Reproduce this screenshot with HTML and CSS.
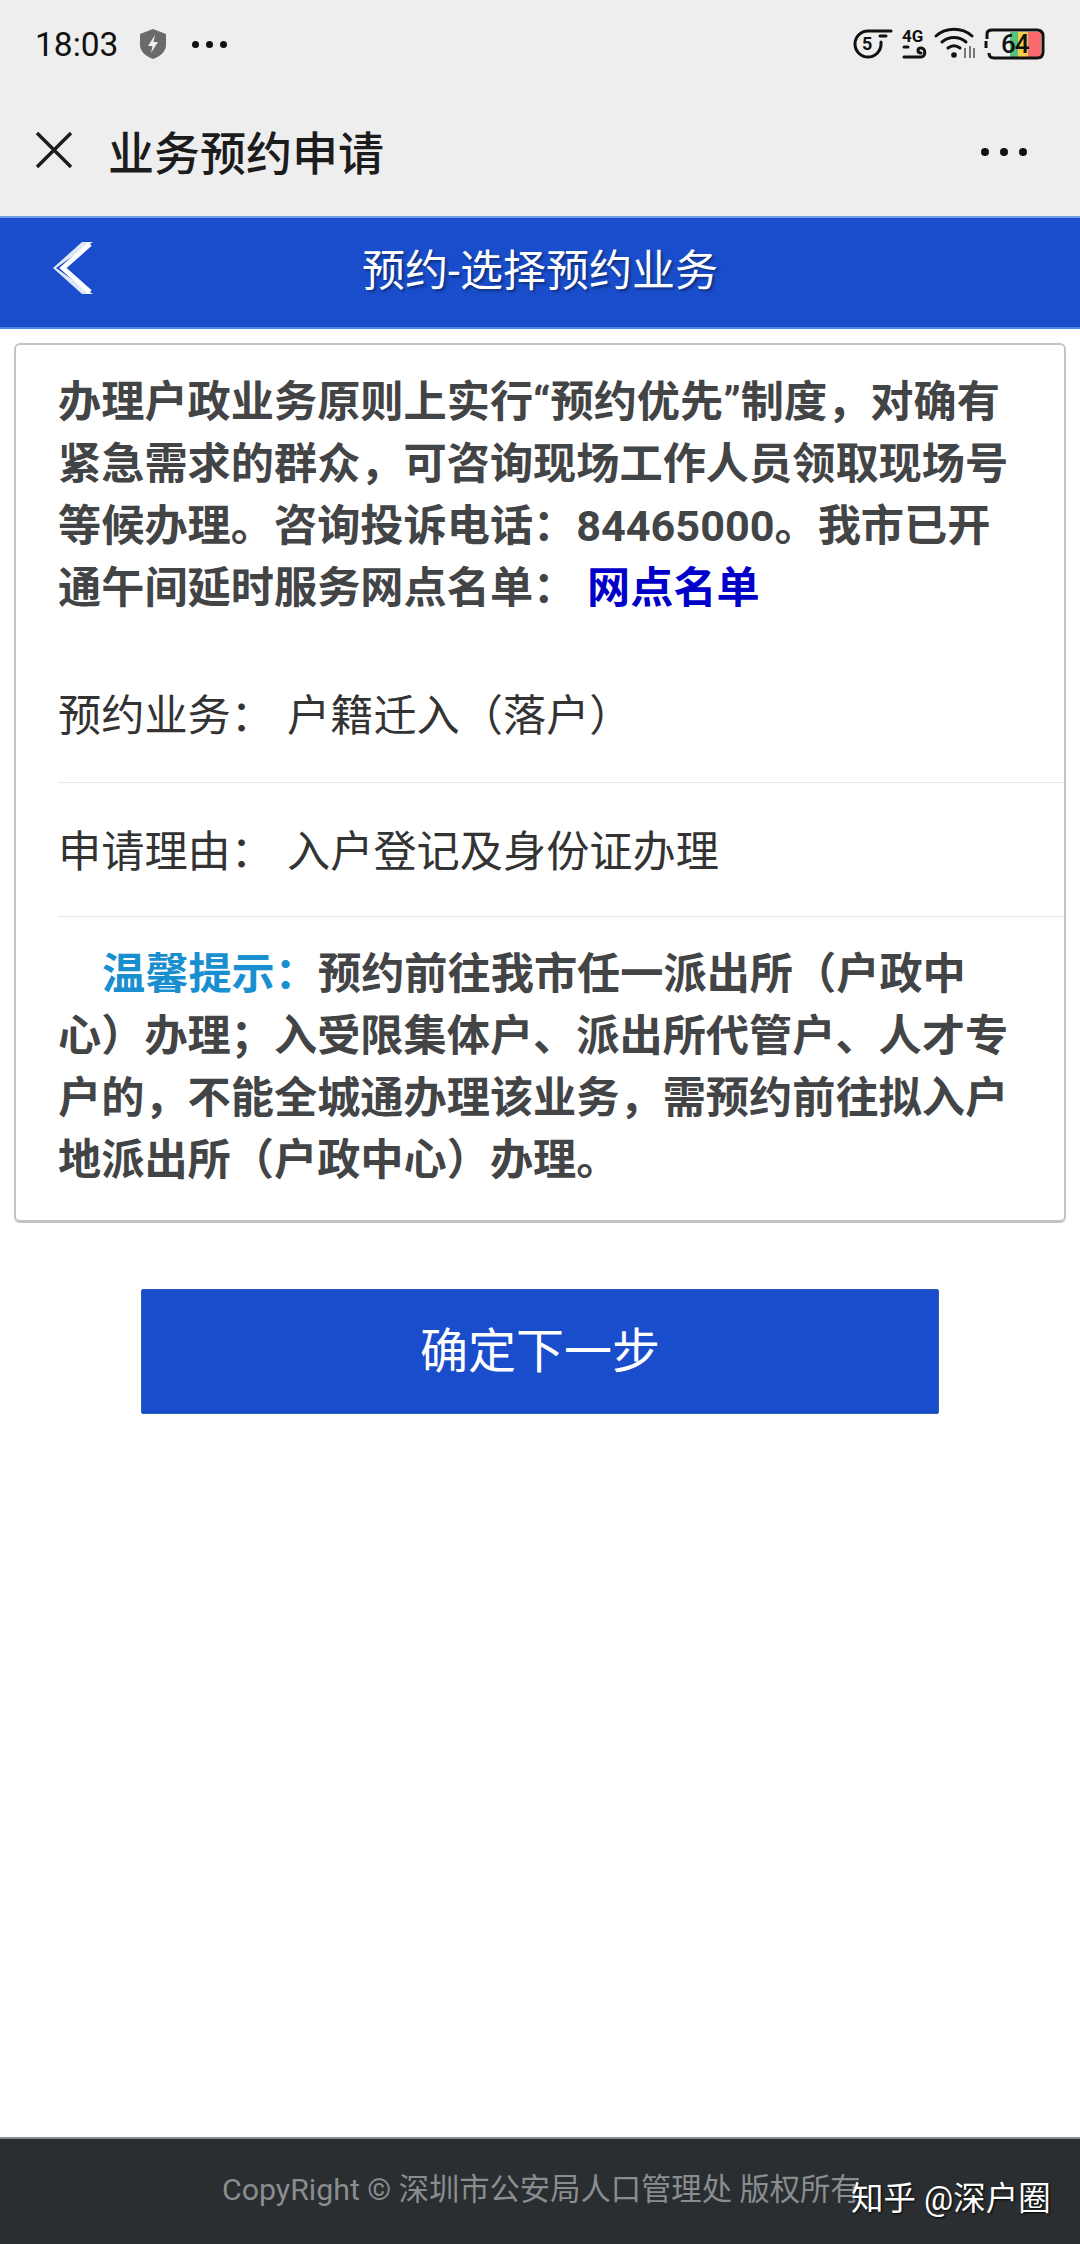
FILE: index.html
```html
<!DOCTYPE html>
<html lang="zh-CN">
<head>
<meta charset="UTF-8">
<meta name="viewport" content="width=device-width, initial-scale=1.0">
<title>业务预约申请</title>
<link rel="stylesheet" href="styles.css">
</head>
<body>
<div class="top">
  <div class="status">
    <span class="time">18:03</span>
    <svg class="shield" width="28" height="32" viewBox="0 0 28 32">
      <path d="M14 1 L27 6 V17 C27 24 20 29 14 31 C8 29 1 24 1 17 V6 Z" fill="#6a6a6a"/>
      <path d="M16 7 L9 18 H13.5 L12 25 L19 14 H14.5 Z" fill="#eee"/>
    </svg>
    <span class="dots small"><i></i><i></i><i></i></span>
    <span class="status-right">
      <svg width="40" height="32" viewBox="0 0 40 32">
        <path d="M38 3 H15 A13 13 0 1 0 28 16 V14" fill="none" stroke="#111" stroke-width="3" stroke-linecap="round"/>
        <path d="M27 8 H33" stroke="#111" stroke-width="3" stroke-linecap="round"/>
        <text x="9" y="22" class="ico-text">5</text>
      </svg>
      <svg width="26" height="32" viewBox="0 0 26 32">
        <text x="1" y="14" class="ico-text small-ico">4G</text>
        <path d="M3 19 H7 M3 29 H20 C25 29 25 20 20 20 C16 20 16 25 20 25" fill="none" stroke="#111" stroke-width="3" stroke-linecap="round"/>
      </svg>
      <svg width="42" height="32" viewBox="0 0 42 32">
        <path d="M1 8 C11 -1 27 -1 37 8 M7 14 C14 8 24 8 31 14 M13 20 C17 17 21 17 25 20" fill="none" stroke="#111" stroke-width="3" stroke-linecap="round"/>
        <circle cx="19" cy="27" r="2.8" fill="#111"/>
        <path d="M30 20 V30 M35 18 V30 M39 20 V30" stroke="#777" stroke-width="2"/>
      </svg>
      <svg width="60" height="32" viewBox="0 0 60 32">
        <path d="M25 4 H54 V29 H25 Z" fill="#58c27d"/>
        <path d="M33 4 H43 V29 H33 Z" fill="#f2cf4a"/>
        <path d="M43 4 H56 V29 H43 Z" fill="#fb6a6e"/>
        <path d="M2 11 V6 Q2 2 7 2 H52 Q58 2 58 8 V24 Q58 30 52 30 H9 Q4 30 4 25" fill="none" stroke="#111" stroke-width="3"/>
        <path d="M1 13 V20" stroke="#111" stroke-width="3"/>
        <text x="16" y="25" class="battery-num">64</text>
      </svg>
    </span>
  </div>
  <div class="titlebar">
    <svg class="close" width="38" height="38" viewBox="0 0 38 38">
      <path d="M2 2 L36 36 M36 2 L2 36" stroke="#1c1c1c" stroke-width="3.4"/>
    </svg>
    <span class="app-title">业务预约申请</span>
    <span class="dots"><i></i><i></i><i></i></span>
  </div>
</div>

<div class="header">
  <svg class="back" width="44" height="54" viewBox="0 0 44 54">
    <path d="M40 1 L3 27 L40 53 H29 L0 27 L29 1 Z" fill="#dfe6f8"/>
    <path d="M37 3 L10 27 L37 51" fill="none" stroke="#fff" stroke-width="5"/>
  </svg>
  <h1>预约-选择预约业务</h1>
</div>

<div class="card">
  <p class="notice">办理户政业务原则上实行“预约优先”制度，对确有紧急需求的群众，可咨询现场工作人员领取现场号等候办理。咨询投诉电话：84465000。我市已开通午间延时服务网点名单： <a class="link">网点名单</a></p>
  <div class="row first">
    <span class="row-label">预约业务：</span><span>户籍迁入（落户）</span>
  </div>
  <div class="row">
    <span class="row-label">申请理由：</span><span>入户登记及身份证办理</span>
  </div>
  <p class="tip"><span class="tip-head">温馨提示：</span>预约前往我市任一派出所（户政中心）办理；入受限集体户、派出所代管户、人才专户的，不能全城通办理该业务，需预约前往拟入户地派出所（户政中心）办理。</p>
</div>

<div class="actions">
  <button class="next" type="button">确定下一步</button>
</div>

<div class="footer">
  <span class="copy">CopyRight © 深圳市公安局人口管理处 版权所有</span>
  <span class="mark">知乎 @深户圈</span>
</div>
</body>
</html>
```

FILE: styles.css
```css
* {
  box-sizing: border-box;
}

html, body {
  margin: 0;
  padding: 0;
}

body {
  width: 1080px;
  height: 2244px;
  display: flex;
  flex-direction: column;
  background-color: #fff;
  font-family: "Roboto", "Noto Sans CJK SC", sans-serif;
  color: #333;
}

.top {
  height: 216px;
  background-color: #eee;
}

.status {
  height: 88px;
  padding: 0 35px;
  display: flex;
  align-items: center;
}

.time {
  font-size: 33.5px;
  color: #111;
}

.shield {
  margin-left: 21px;
}

.dots {
  display: flex;
  gap: 11px;
}

.dots i {
  width: 8px;
  height: 8px;
  border-radius: 50%;
  background-color: #111;
}

.dots.small {
  margin-left: 25px;
  gap: 7px;
}

.dots.small i {
  width: 7px;
  height: 7px;
}

.status-right {
  margin-left: auto;
  display: flex;
  align-items: center;
  gap: 8px;
}

.status-right svg {
  overflow: visible;
}

.ico-text {
  font-family: "Roboto", sans-serif;
  font-size: 18px;
  font-weight: 700;
  fill: #111;
}

.small-ico {
  font-size: 17px;
}

.battery-num {
  font-family: "Roboto", sans-serif;
  font-size: 26px;
  font-weight: 500;
  letter-spacing: -1px;
  fill: #111;
}

.titlebar {
  height: 128px;
  padding: 0 53px 4px 35px;
  display: flex;
  align-items: center;
}

.app-title {
  margin-left: 35px;
  font-size: 46px;
  font-weight: 500;
  color: #1c1c1c;
}

.titlebar .dots {
  margin-left: auto;
  margin-top: 4px;
}

.header {
  position: relative;
  height: 113px;
  padding-bottom: 11px;
  background-color: #1a4dcb;
  border-top: 2px solid #6da0e6;
  border-bottom: 2px solid #4a86dc;
  display: flex;
  align-items: center;
  justify-content: center;
}

.back {
  position: absolute;
  left: 53px;
  top: 23px;
}

.header h1 {
  margin: 0;
  font-size: 43px;
  font-weight: 400;
  color: #fff;
  text-shadow: 2px 2px 3px rgba(0, 0, 0, 0.4);
}

.card {
  margin: 14px 14px 0;
  height: 880px;
  border: 2px solid #c4c4c4;
  border-bottom-width: 3px;
  border-radius: 6px;
  padding: 27px 0 0 42px;
  font-size: 43.2px;
  line-height: 62px;
}

.notice {
  margin: 0;
  padding-right: 43px;
  font-weight: 700;
  color: #424446;
}

.link {
  color: #0000c8;
}

.row {
  height: 134px;
  padding-top: 39px;
  border-bottom: 1px solid #e6e6e6;
  color: #333;
}

.row.first {
  height: 163px;
  padding-top: 66px;
}

.row-label {
  display: inline-block;
  width: 229px;
}

.tip {
  margin: 27px 0 0;
  padding-right: 43px;
  font-weight: 700;
  color: #424446;
  text-indent: 44px;
}

.tip-head {
  color: #1a8fd0;
}

.actions {
  margin-top: 66px;
  display: flex;
  justify-content: center;
}

.next {
  width: 798px;
  height: 125px;
  padding: 0 0 10px;
  border: 1px solid #2f5eb8;
  border-radius: 2px;
  background-color: #1a4dcb;
  color: #fff;
  font-family: inherit;
  font-size: 48px;
}

.footer {
  position: relative;
  margin-top: auto;
  height: 107px;
  background-color: #2a2e30;
  border-top: 2px solid #8a8d8e;
  padding: 32px 0 0 222px;
}

.copy {
  font-size: 30.3px;
  line-height: 38px;
  color: #8a8d8f;
  display: block;
}

.mark {
  position: absolute;
  left: 851px;
  top: 38px;
  font-size: 32.5px;
  line-height: 44px;
  color: #fff;
  text-shadow: 1px 1px 2px #000;
}
```
